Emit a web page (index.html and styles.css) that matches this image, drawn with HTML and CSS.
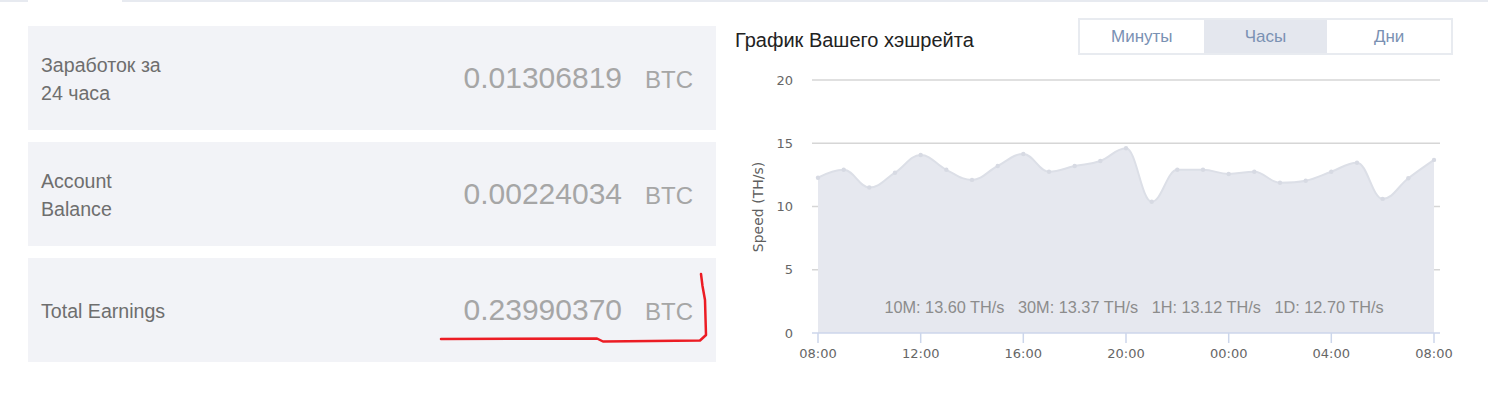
FILE: index.html
```html
<!DOCTYPE html>
<html>
    <head>
<title>Hashrate</title>
        <link rel="stylesheet" href="styles.css">
    </head>
    <body>
        <div class="tabLine"><span class="activeTab"></span></div>

        <div class="mainRow">
            <div class="earnings">
                <div class="earnCard">
                    <div class="earnLabel">Заработок за 24 часа</div>
                    <div class="earnAmount">
                        <span class="earnValue">0.01306819</span>
                        <span class="earnUnit">BTC</span>
                    </div>
                </div>
                <div class="earnCard">
                    <div class="earnLabel">Account Balance</div>
                    <div class="earnAmount">
                        <span class="earnValue">0.00224034</span>
                        <span class="earnUnit">BTC</span>
                    </div>
                </div>
                <div class="earnCard">
                    <div class="earnLabel">Total Earnings</div>
                    <div class="earnAmount">
                        <span class="earnValue">0.23990370</span>
                        <span class="earnUnit">BTC</span>
                    </div>
                </div>
            </div>

            <div class="hashrate">
                <div class="hashHead">
                    <h4 class="hashTitle">График Вашего хэшрейта</h4>
                    <div class="periodBtns">
                        <span class="periodBtn">Минуты</span>
                        <span class="periodBtn activeBtn">Часы</span>
                        <span class="periodBtn">Дни</span>
                    </div>
                </div>

                <svg class="hashChart" id="hashChart" width="718" height="300">
                    <g class="gridLines">
                        <line x1="77" x2="705" y1="18" y2="18"></line>
                        <line x1="77" x2="705" y1="81.25" y2="81.25"></line>
                        <line x1="77" x2="705" y1="144.5" y2="144.5"></line>
                        <line x1="77" x2="705" y1="207.75" y2="207.75"></line>
                    </g>
                    <path id="hashArea" class="hashArea" d=""></path>
                    <path id="hashLine" class="hashLine" d=""></path>
                    <g id="hashDots" class="hashDots"></g>
                    <g class="axisLine">
                        <line x1="77" x2="705" y1="271" y2="271"></line>
                        <line x1="83" x2="83" y1="271" y2="281"></line>
                        <line x1="185.7" x2="185.7" y1="271" y2="281"></line>
                        <line x1="288.3" x2="288.3" y1="271" y2="281"></line>
                        <line x1="391" x2="391" y1="271" y2="281"></line>
                        <line x1="493.7" x2="493.7" y1="271" y2="281"></line>
                        <line x1="596.3" x2="596.3" y1="271" y2="281"></line>
                        <line x1="699" x2="699" y1="271" y2="281"></line>
                    </g>
                    <g class="yLabels">
                        <text x="58" y="23">20</text>
                        <text x="58" y="86">15</text>
                        <text x="58" y="149">10</text>
                        <text x="58" y="212">5</text>
                        <text x="58" y="276">0</text>
                    </g>
                    <g class="xLabels">
                        <text x="83" y="296">08:00</text>
                        <text x="185.7" y="296">12:00</text>
                        <text x="288.3" y="296">16:00</text>
                        <text x="391" y="296">20:00</text>
                        <text x="493.7" y="296">00:00</text>
                        <text x="596.3" y="296">04:00</text>
                        <text x="699" y="296">08:00</text>
                    </g>
                    <text class="yTitle" transform="translate(28 145) rotate(-90)">Speed (TH/s)</text>
                    <text class="hashStats" x="399" y="251">10M: 13.60 TH/s   30M: 13.37 TH/s   1H: 13.12 TH/s   1D: 12.70 TH/s</text>
                </svg>
            </div>
        </div>

        <svg class="redMark" width="1488" height="403">
            <path d="M441 339 L597 338.5 L603 341.5 L700 340.5 L706 335 L705.5 318 L705 300 L702.5 286 L701 274"></path>
        </svg>

        <script>
            // hourly speed, 08:00 -> 08:00
            var speeds = [12.28, 12.9, 11.5, 12.67, 14.07, 12.9, 12.1, 13.2, 14.15, 12.75, 13.2, 13.6, 14.6,
                          10.38, 12.9, 12.9, 12.57, 12.75, 11.88, 12.04, 12.75, 13.46, 10.6, 12.23, 13.68];

            var pts = speeds.map(function(v, i) {
                return { x: 83 + i * 616 / 24, y: 271 - v * 12.65 };
            });

            // spline control points, same idea as highcharts areaspline
            function controls(i) {
                var p = pts[i - 1], c = pts[i], n = pts[i + 1];
                var s = 1.5;
                var lx = (s * c.x + p.x) / (s + 1), ly = (s * c.y + p.y) / (s + 1);
                var rx = (s * c.x + n.x) / (s + 1), ry = (s * c.y + n.y) / (s + 1);
                var corr = ((ry - ly) * (rx - c.x)) / (rx - lx) + c.y - ry;
                ly += corr;
                ry += corr;
                if (ly > p.y && ly > c.y) { ly = Math.max(p.y, c.y); ry = 2 * c.y - ly; }
                else if (ly < p.y && ly < c.y) { ly = Math.min(p.y, c.y); ry = 2 * c.y - ly; }
                if (ry > n.y && ry > c.y) { ry = Math.max(n.y, c.y); ly = 2 * c.y - ry; }
                else if (ry < n.y && ry < c.y) { ry = Math.min(n.y, c.y); ly = 2 * c.y - ry; }
                return { lx: lx, ly: ly, rx: rx, ry: ry };
            }

            var ctl = pts.map(function(pt, i) {
                if (i === 0 || i === pts.length - 1) {
                    return { lx: pt.x, ly: pt.y, rx: pt.x, ry: pt.y };
                }
                return controls(i);
            });

            var d = "M" + pts[0].x.toFixed(1) + " " + pts[0].y.toFixed(1);
            for (var i = 1; i < pts.length; i++) {
                d += " C" + ctl[i - 1].rx.toFixed(1) + " " + ctl[i - 1].ry.toFixed(1) + " "
                   + ctl[i].lx.toFixed(1) + " " + ctl[i].ly.toFixed(1) + " "
                   + pts[i].x.toFixed(1) + " " + pts[i].y.toFixed(1);
            }

            document.getElementById("hashLine").setAttribute("d", d);
            document.getElementById("hashArea").setAttribute("d", d + " L699 271 L83 271 Z");

            var dots = "";
            pts.forEach(function(pt) {
                dots += '<circle cx="' + pt.x.toFixed(1) + '" cy="' + pt.y.toFixed(1) + '" r="2.2"></circle>';
            });
            document.getElementById("hashDots").innerHTML = dots;
        </script>
    </body>
</html>
```

FILE: styles.css
```css
body{
    margin:0;
    background:white;
    font-family:"Liberation Sans", Arial, sans-serif;
}
.tabLine{
    height:2px;
    background:#e7eaf0;
    position:relative;
}
.activeTab{
    display:block;
    margin-left:28px;
    width:94px;
    height:2px;
    background:white;
}
.mainRow{
    display:flex;
    padding:16px 0 0 28px;
    gap:19px;
}
.earnings{
    width:688px;
    margin-top:8px;
    display:flex;
    flex-direction:column;
    gap:12px;
}
.earnCard{
    height:104px;
    background:#f2f3f7;
    display:flex;
    align-items:center;
    padding:0 23px 0 13px;
    box-sizing:border-box;
}
.earnLabel{
    width:135px;
    font-size:19.6px;
    line-height:28px;
    color:#6e6e6e;
    margin-top:2px;
}
.earnAmount{
    margin-left:auto;
    display:flex;
    align-items:baseline;
    gap:23px;
}
.earnValue{
    font-size:30px;
    color:#a6a6a6;
}
.earnUnit{
    font-size:24px;
    color:#a6a6a6;
}
.hashrate{
    width:718px;
}
.hashHead{
    display:flex;
    justify-content:space-between;
    align-items:flex-start;
}
.hashTitle{
    margin:11px 0 0 0;
    font-size:20px;
    font-weight:normal;
    color:#222;
}
.periodBtns{
    display:flex;
    border:2px solid #e8ebf0;
}
.periodBtn{
    width:123.7px;
    height:33px;
    line-height:33px;
    text-align:center;
    font-size:17px;
    color:#7a91b3;
}
.activeBtn{
    background:#e4e7ee;
}
.hashChart{
    display:block;
    margin-top:7px;
}
.gridLines line{
    stroke:#d6d6d6;
    stroke-width:1.5;
}
.hashArea{
    fill:#e6e8ef;
}
.hashLine{
    fill:none;
    stroke:#dcdfe7;
    stroke-width:2;
}
.hashDots circle{
    fill:#d7dae3;
}
.axisLine line{
    stroke:#ccd6eb;
    stroke-width:1.5;
}
.yLabels text{
    font-family:"DejaVu Sans", sans-serif;
    font-size:13px;
    fill:#666;
    text-anchor:end;
}
.xLabels text{
    font-family:"DejaVu Sans", sans-serif;
    font-size:13px;
    fill:#666;
    text-anchor:middle;
}
.yTitle{
    font-family:"DejaVu Sans", sans-serif;
    font-size:14px;
    fill:#5f5f5f;
    text-anchor:middle;
}
.hashStats{
    font-family:"Liberation Sans", Arial, sans-serif;
    font-size:16.3px;
    fill:#8c8c8c;
    text-anchor:middle;
    white-space:pre;
}
.redMark{
    position:absolute;
    top:0;
    left:0;
    pointer-events:none;
}
.redMark path{
    fill:none;
    stroke:#ec1c24;
    stroke-width:2.5;
    stroke-linecap:round;
    stroke-linejoin:round;
}
```
